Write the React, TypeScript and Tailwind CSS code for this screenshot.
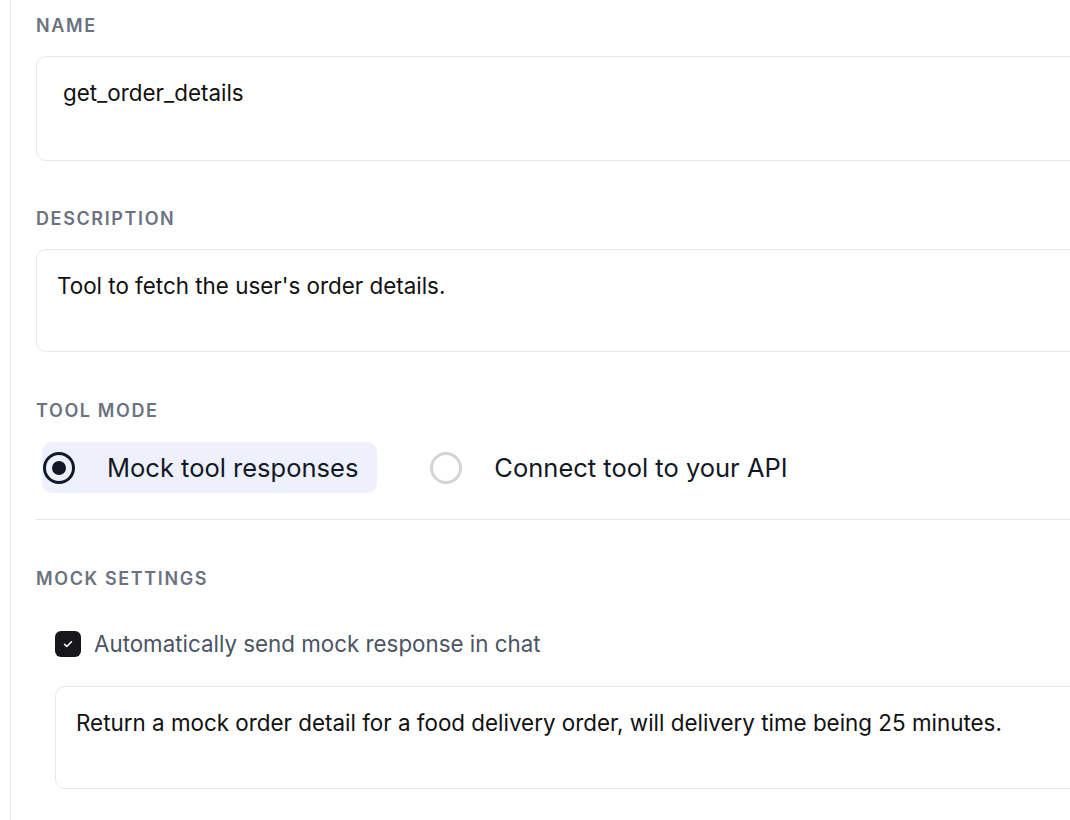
import React, { useState } from "react";

const font = { fontFamily: "Inter, 'Noto Sans', sans-serif" };

function Label({ children }: { children: React.ReactNode }) {
  return (
    <div className="text-[18px] leading-[24px] font-semibold tracking-[0.09em] text-[#6b7280]">
      {children}
    </div>
  );
}

function Radio({ checked, label, onClick }: { checked: boolean; label: string; onClick: () => void }) {
  return (
    <button
      onClick={onClick}
      className={`flex items-center h-[51px] pl-[1px] pr-[19px] rounded-[10px] ${checked ? "bg-[#eef0fc]" : ""}`}
    >
      <span
        className={`flex items-center justify-center w-[32px] h-[32px] rounded-full border-[3px] ${
          checked ? "border-[#111827]" : "border-[#d4d4d8]"
        }`}
      >
        {checked && <span className="w-[14px] h-[14px] rounded-full bg-[#111827]" />}
      </span>
      <span className="ml-[32px] text-[25.5px] leading-[32px] text-[#111827]">{label}</span>
    </button>
  );
}

export default function App() {
  const [mode, setMode] = useState("mock");
  const [auto, setAuto] = useState(true);

  return (
    <div style={font} className="w-[1070px] h-[820px] overflow-hidden bg-white">
      <div className="ml-[10px] w-[1200px] h-full border-l border-[#e5e7eb] pl-[25px] pt-[14px]">
        <Label>NAME</Label>
        <div className="mt-[18px] h-[105px] rounded-[10px] border border-[#e5e7eb] pl-[26px] pt-[22px] text-[22.4px] leading-[28px] text-[#111]">
          get_order_details
        </div>

        <div className="mt-[46px]">
          <Label>DESCRIPTION</Label>
        </div>
        <div className="mt-[18px] h-[103px] rounded-[10px] border border-[#e5e7eb] pl-[20px] pt-[22px] text-[22.4px] leading-[28px] text-[#111]">
          Tool to fetch the user's order details.
        </div>

        <div className="mt-[47px]">
          <Label>TOOL MODE</Label>
        </div>
        <div className="mt-[19px] ml-[6px] flex items-center gap-[52px]">
          <Radio checked={mode === "mock"} label="Mock tool responses" onClick={() => setMode("mock")} />
          <Radio checked={mode === "api"} label="Connect tool to your API" onClick={() => setMode("api")} />
        </div>
        <div className="mt-[26px] border-t border-[#e5e7eb]" />

        <div className="mt-[47px]">
          <Label>MOCK SETTINGS</Label>
        </div>
        <div className="mt-[38px] ml-[19px] flex items-center gap-[13px]">
          <button
            onClick={() => setAuto(!auto)}
            className={`w-[26px] h-[26px] rounded-[6px] flex items-center justify-center ${
              auto ? "bg-[#18181b]" : "border border-[#d4d4d8]"
            }`}
          >
            {auto && (
              <svg width="12" height="12" viewBox="0 0 24 24" fill="none" stroke="white" strokeWidth="3" strokeLinecap="round" strokeLinejoin="round">
                <path d="M5 12.5l4.5 4.5L19 7.5" />
              </svg>
            )}
          </button>
          <span className="text-[22.35px] leading-[30px] text-[#4b5563]">Automatically send mock response in chat</span>
        </div>
        <div className="mt-[27px] ml-[19px] h-[103px] rounded-[10px] border border-[#e5e7eb] pl-[20px] pt-[22px] text-[22.4px] leading-[28px] text-[#111]">
          Return a mock order detail for a food delivery order, will delivery time being 25 minutes.
        </div>
      </div>
    </div>
  );
}
